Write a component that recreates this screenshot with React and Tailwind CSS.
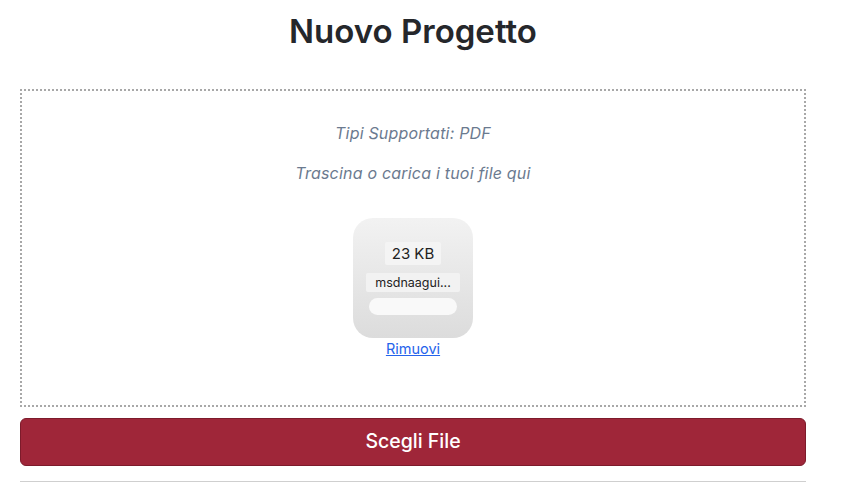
export default function App() {
  return (
    <div className="w-[851px] h-[492px] bg-white overflow-hidden font-['Inter',sans-serif]">
      <div className="w-[786px] ml-[20px] flex flex-col">
        <h1 className="mt-[12px] h-[38px] leading-[38px] text-center text-[33px] font-semibold text-[#25272b]">
          Nuovo Progetto
        </h1>

        <div className="mt-[39px] h-[318px] border-2 border-dotted border-[#a8a8a8] flex flex-col items-center">
          <p className="mt-[32px] h-[20px] leading-[20px] text-[16px] tracking-[0.2px] italic text-[#6b7a8f]">
            Tipi Supportati: PDF
          </p>
          <p className="mt-[20px] h-[20px] leading-[20px] text-[16px] tracking-[0.2px] italic text-[#6b7a8f]">
            Trascina o carica i tuoi file qui
          </p>

          <div className="mt-[35px] w-[120px] h-[120px] rounded-[20px] bg-gradient-to-b from-[#f2f2f2] to-[#dcdcdc] flex flex-col items-center">
            <div className="mt-[24px] h-[23px] px-[7px] bg-[#f4f4f4] rounded-[2px] leading-[23px] text-[15px] text-[#222]">
              23 KB
            </div>
            <div className="mt-[8px] w-[94px] h-[19px] bg-[#f2f2f2] rounded-[2px] leading-[19px] text-[12.5px] text-[#222] text-center whitespace-nowrap">
              msdnaagui...
            </div>
            <div className="mt-[6px] w-[88px] h-[17px] bg-[#f9f9f9] rounded-full" />
          </div>
          <a href="#" className="mt-[2px] leading-[18px] text-[14.5px] text-[#2563eb] underline">
            Rimuovi
          </a>
        </div>

        <button className="mt-[11px] h-[48px] w-full rounded-[6px] bg-[#9f2639] border border-[#7d1b2b] text-white text-[19.5px] font-medium">
          Scegli File
        </button>

        <div className="mt-[15px] h-px bg-[#cfcfcf]" />
      </div>
    </div>
  );
}
